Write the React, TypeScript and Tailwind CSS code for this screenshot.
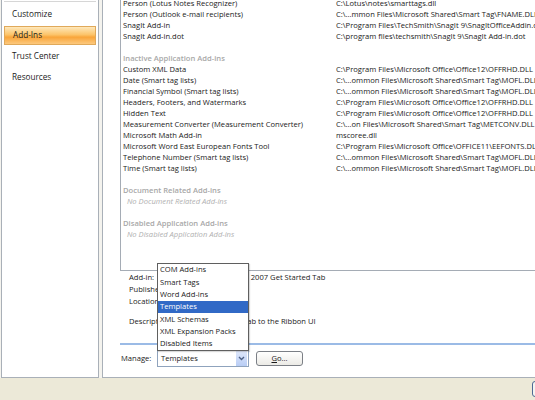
import React from "react";

const F = "font-['Open_Sans',sans-serif]";

type Row = { n: string; p?: string; kind?: "row" | "head" | "none" | "blank" };

const rows: Row[] = [
  { n: "Person (Lotus Notes Recognizer)", p: "C:\\Lotus\\notes\\smarttags.dll" },
  { n: "Person (Outlook e-mail recipients)", p: "C:\\...mmon Files\\Microsoft Shared\\Smart Tag\\FNAME.DLL" },
  { n: "SnagIt Add-in", p: "C:\\Program Files\\TechSmith\\SnagIt 9\\SnagItOfficeAddin.dll" },
  { n: "SnagIt Add-in.dot", p: "C:\\program files\\techsmith\\SnagIt 9\\SnagIt Add-in.dot" },
  { n: "", kind: "blank" },
  { n: "Inactive Application Add-ins", kind: "head" },
  { n: "Custom XML Data", p: "C:\\Program Files\\Microsoft Office\\Office12\\OFFRHD.DLL" },
  { n: "Date (Smart tag lists)", p: "C:\\...ommon Files\\Microsoft Shared\\Smart Tag\\MOFL.DLL" },
  { n: "Financial Symbol (Smart tag lists)", p: "C:\\...ommon Files\\Microsoft Shared\\Smart Tag\\MOFL.DLL" },
  { n: "Headers, Footers, and Watermarks", p: "C:\\Program Files\\Microsoft Office\\Office12\\OFFRHD.DLL" },
  { n: "Hidden Text", p: "C:\\Program Files\\Microsoft Office\\Office12\\OFFRHD.DLL" },
  { n: "Measurement Converter (Measurement Converter)", p: "C:\\...on Files\\Microsoft Shared\\Smart Tag\\METCONV.DLL" },
  { n: "Microsoft Math Add-in", p: "mscoree.dll" },
  { n: "Microsoft Word East European Fonts Tool", p: "C:\\Program Files\\Microsoft Office\\OFFICE11\\EEFONTS.DLL" },
  { n: "Telephone Number (Smart tag lists)", p: "C:\\...ommon Files\\Microsoft Shared\\Smart Tag\\MOFL.DLL" },
  { n: "Time (Smart tag lists)", p: "C:\\...ommon Files\\Microsoft Shared\\Smart Tag\\MOFL.DLL" },
  { n: "", kind: "blank" },
  { n: "Document Related Add-ins", kind: "head" },
  { n: "No Document Related Add-ins", kind: "none" },
  { n: "", kind: "blank" },
  { n: "Disabled Application Add-ins", kind: "head" },
  { n: "No Disabled Application Add-ins", kind: "none" },
];

const menu = ["COM Add-ins", "Smart Tags", "Word Add-ins", "Templates", "XML Schemas", "XML Expansion Packs", "Disabled Items"];

export default function App() {
  return (
    <div className={`w-[535px] h-[400px] bg-[#ece9d8] flex flex-col overflow-hidden relative ${F}`}>
      <div className="flex h-[378px] bg-[#f4f3ee]">
        {/* left nav */}
        <div className="w-[98px] ml-[1px] bg-white border-l border-r border-b border-[#a9b0b8] flex flex-col">
          <div className="h-[1px] mt-[1px] mx-[2px] bg-[#d6d6d6]" />
          <div className="pt-[2px] flex flex-col text-[8.2px] text-[#1b1b1b]">
            <div className="h-[21px] flex items-center pl-[10px]">Customize</div>
            <div className="h-[21px] flex items-center px-[2px]">
              <div className="h-[19px] w-full flex items-center pl-[8px] border border-[#e0a95a] bg-[linear-gradient(180deg,#fee8bb_0%,#fcc46a_45%,#f9a53a_60%,#fcc97e_100%)]">
                Add-Ins
              </div>
            </div>
            <div className="h-[21px] flex items-center pl-[10px]">Trust Center</div>
            <div className="h-[21px] flex items-center pl-[10px]">Resources</div>
          </div>
        </div>
        {/* right panel */}
        <div className="flex-1 ml-[3px] bg-white border-l border-b border-[#a9b0b8] overflow-hidden flex flex-col">
          <div className="ml-[17px] mt-[-3px] h-[274px] w-[600px] border border-[#a5acb5] flex flex-col text-[7.6px] text-[#1a1a1a]">
            {rows.map((r, i) => {
              if (r.kind === "blank") return <div key={i} className="h-[11px]" />;
              if (r.kind === "head")
                return (
                  <div key={i} className="h-[11px] flex items-center pl-[2px] font-semibold text-[#a8a8a8]">
                    {r.n}
                  </div>
                );
              if (r.kind === "none")
                return (
                  <div key={i} className="h-[11px] flex items-center pl-[6px] italic text-[#b0b0b0]">
                    {r.n}
                  </div>
                );
              return (
                <div key={i} className="h-[11px] flex items-center whitespace-nowrap">
                  <div className="w-[215px] pl-[2px] shrink-0">{r.n}</div>
                  <div>{r.p}</div>
                </div>
              );
            })}
          </div>
          {/* details */}
          <div className="ml-[26px] mt-[1px] flex flex-col text-[7.6px] text-[#1a1a1a] whitespace-nowrap">
            <div className="h-[12px] flex items-center">
              <div className="w-[65px]">Add-in:</div>
              <div>Microsoft Word 2007 Get Started Tab</div>
            </div>
            <div className="h-[12px] flex items-center">
              <div className="w-[65px]">Publisher:</div>
            </div>
            <div className="h-[12px] flex items-center">
              <div className="w-[65px]">Location:</div>
            </div>
            <div className="h-[8px]" />
            <div className="h-[12px] flex items-center">
              <div className="w-[65px]">Description:</div>
              <div>A Get Started Tab to the Ribbon UI</div>
            </div>
          </div>
          <div className="ml-[17px] mt-[15px] h-[2px] bg-[#9bbbe6]" />
          <div className="ml-[18px] mt-[5px] flex items-center text-[7.6px] text-[#1a1a1a]">
            <div className="w-[36px]">Manage:</div>
            <div className="w-[92px] h-[17px] border border-[#8fa3bd] bg-white flex items-center">
              <div className="flex-1 pl-[3px]">Templates</div>
              <div className="w-[11px] h-[15px] mr-[1px] bg-[linear-gradient(180deg,#dfe8fb,#b9cdf5)] flex items-center justify-center">
                <svg width="7" height="5" viewBox="0 0 7 5">
                  <path d="M1 1 L3.5 3.5 L6 1" stroke="#4d6185" strokeWidth="1.4" fill="none" />
                </svg>
              </div>
            </div>
            <div className="ml-[7px] w-[47px] h-[15px] rounded-[3px] border border-[#7b7f86] bg-[linear-gradient(180deg,#ffffff,#ecebe6)] flex items-center justify-center">
              <span>
                <span className="underline">G</span>o...
              </span>
            </div>
          </div>
        </div>
      </div>
      {/* bottom strip */}
      <div className="flex-1 flex pt-[3px] pl-[532px]">
        <div className="w-[60px] h-[16px] rounded-[3px] border border-[#4e6a94] bg-[#f4f4f2] shrink-0" />
      </div>
      {/* dropdown menu overlay */}
      <div className="absolute left-[157px] top-[263px] w-[92px] h-[88px] bg-white border border-[#5f5f5f] flex flex-col text-[7.6px] text-[#1a1a1a] shadow-[1px_1px_1px_rgba(0,0,0,0.15)]">
        {menu.map((m) => (
          <div
            key={m}
            className={`h-[12.3px] flex items-center pl-[2px] ${m === "Templates" ? "bg-[#3169c6] text-white" : ""}`}
          >
            {m}
          </div>
        ))}
      </div>
    </div>
  );
}
